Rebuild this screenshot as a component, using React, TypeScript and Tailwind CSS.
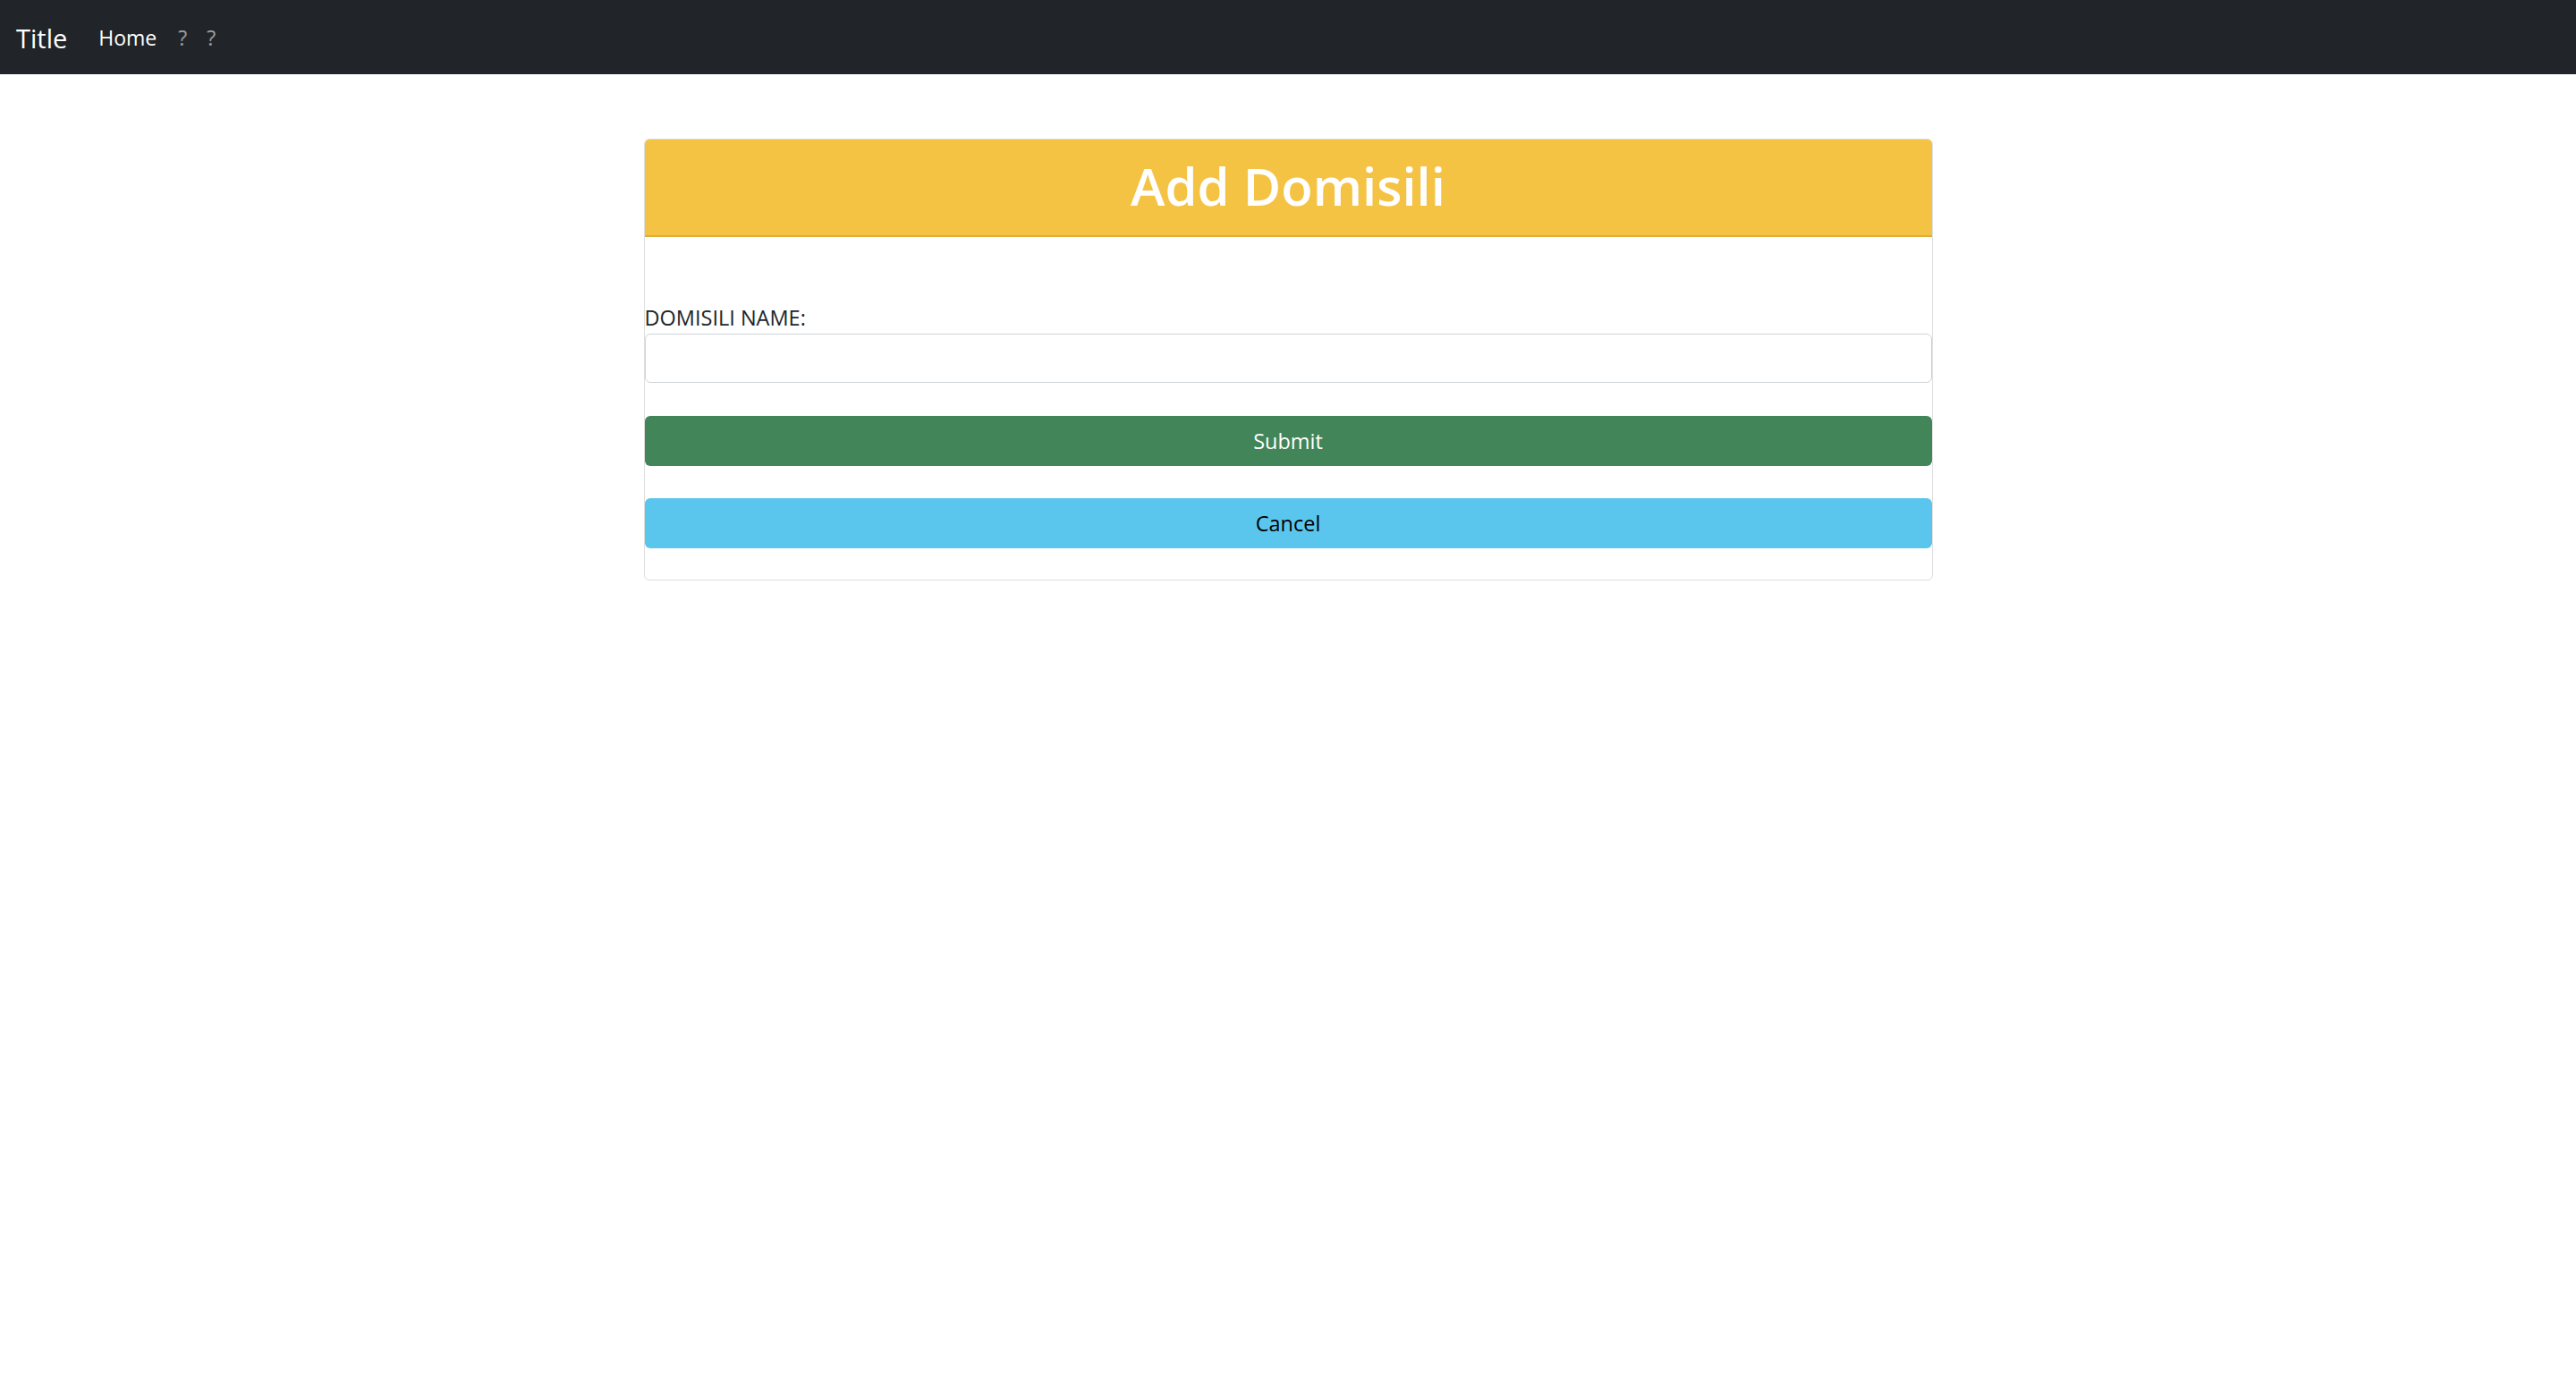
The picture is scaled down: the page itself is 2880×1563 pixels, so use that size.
export default function App() {
  return (
    <div className="min-h-screen bg-white font-['Open_Sans',sans-serif] text-[#212529]">
      {/* Top navbar */}
      <nav className="h-[83px] bg-[#212529] flex items-center px-[18px] pt-[2px]">
        <span className="text-[29px] text-white">Title</span>
        <a className="ml-[35px] text-[23px] text-white">Home</a>
        <a className="ml-[24px] text-[23px] text-white/55">?</a>
        <a className="ml-[22px] text-[23px] text-white/55">?</a>
      </nav>

      <main className="pt-[72px]">
        <div className="w-[1441px] mx-auto border border-[#dedede] rounded-[6px] overflow-hidden">
          <div className="h-[109px] bg-[#f5c344] border-b-2 border-[#dcad38] flex items-center justify-center pb-[4px]">
            <h1 className="text-[58px] font-semibold text-white leading-none">Add Domisili</h1>
          </div>

          <form className="pt-[72px] pb-[35px] flex flex-col">
            <label className="text-[23.5px] leading-[36px]">DOMISILI NAME:</label>
            <input
              type="text"
              className="h-[55px] border border-[#ced4da] rounded-[6px] px-4 text-[24px] outline-none"
            />
            <button
              type="button"
              className="mt-[37px] h-[56px] pt-[2px] bg-[#418559] text-white text-[23.5px] rounded-[6px]"
            >
              Submit
            </button>
            <button
              type="button"
              className="mt-[36px] h-[56px] pt-[2px] bg-[#5bc6ed] text-black text-[23.5px] rounded-[6px]"
            >
              Cancel
            </button>
          </form>
        </div>
      </main>
    </div>
  );
}
